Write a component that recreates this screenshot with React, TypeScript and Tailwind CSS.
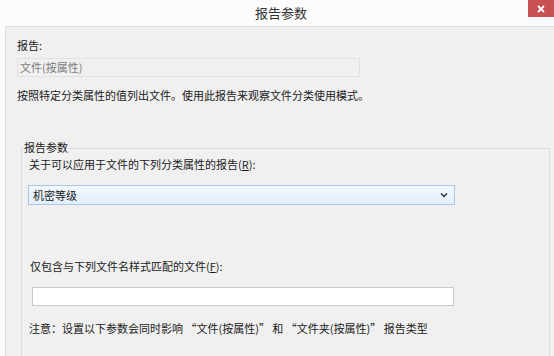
import React from "react";

const font = { fontFamily: '"Noto Sans CJK SC", "Liberation Sans", sans-serif' };

export default function App() {
  return (
    <div className="w-[554px] h-[356px] overflow-hidden bg-[#fcfcfc] text-[11px] text-[#1a1a1a] flex flex-col" style={font}>
      <div className="h-[26px] shrink-0 relative flex items-center justify-center">
        <span className="text-[13px] text-[#333] ml-[8px]">报告参数</span>
        <div className="absolute right-0 top-0 w-[26px] h-[17px] bg-[#c75050] flex items-center justify-center">
          <svg width="8" height="8" viewBox="0 0 8 8">
            <path d="M1 1 L7 7 M7 1 L1 7" stroke="#fff" strokeWidth="1.8" />
          </svg>
        </div>
      </div>
      <div className="flex-1 ml-[5px] border-t border-l border-[#dcdcdc] bg-[#f0f0f0] flex flex-col pl-[11px]">
        <div className="mt-[11px] leading-[14px]">报告:</div>
        <div className="mt-[6px] w-[343px] h-[19px] border border-[#e2e2e2] bg-[#f0f0f0] text-[#7a7a7a] pl-[2px] leading-[17px]">文件(按属性)</div>
        <div className="mt-[11px] leading-[14px]">按照特定分类属性的值列出文件。使用此报告来观察文件分类使用模式。</div>
        <div className="mt-[46px] ml-[4px] w-[529px] flex-1 border-t border-l border-r border-[#dcdcdc] relative flex flex-col pl-[6px]">
          <span className="absolute left-[2px] top-[-9px] bg-[#f0f0f0] leading-[14px] pr-[1px]">报告参数</span>
          <div className="mt-[8px] ml-[1px] leading-[14px]">关于可以应用于文件的下列分类属性的报告(<span className="underline">R</span>):</div>
          <div className="mt-[14px] w-[427px] h-[20px] border border-[#a9c8e8] bg-gradient-to-b from-[#f2f8fe] to-[#e2effb] flex items-center justify-between pl-[4px] pr-[6px]">
            <span>机密等级</span>
            <svg width="8" height="6" viewBox="0 0 8 6">
              <path d="M1 1.5 L4 4.5 L7 1.5" stroke="#333" strokeWidth="1.5" fill="none" />
            </svg>
          </div>
          <div className="mt-[54px] ml-[2px] leading-[14px]">仅包含与下列文件名样式匹配的文件(<span className="underline">F</span>):</div>
          <div className="mt-[14px] ml-[4px] w-[422px] h-[19px] border border-[#c9c9c9] bg-white"></div>
          <div className="mt-[15px] ml-[1px] leading-[14px]">注意：设置以下参数会同时影响 “文件(按属性)” 和 “文件夹(按属性)” 报告类型</div>
        </div>
      </div>
    </div>
  );
}
